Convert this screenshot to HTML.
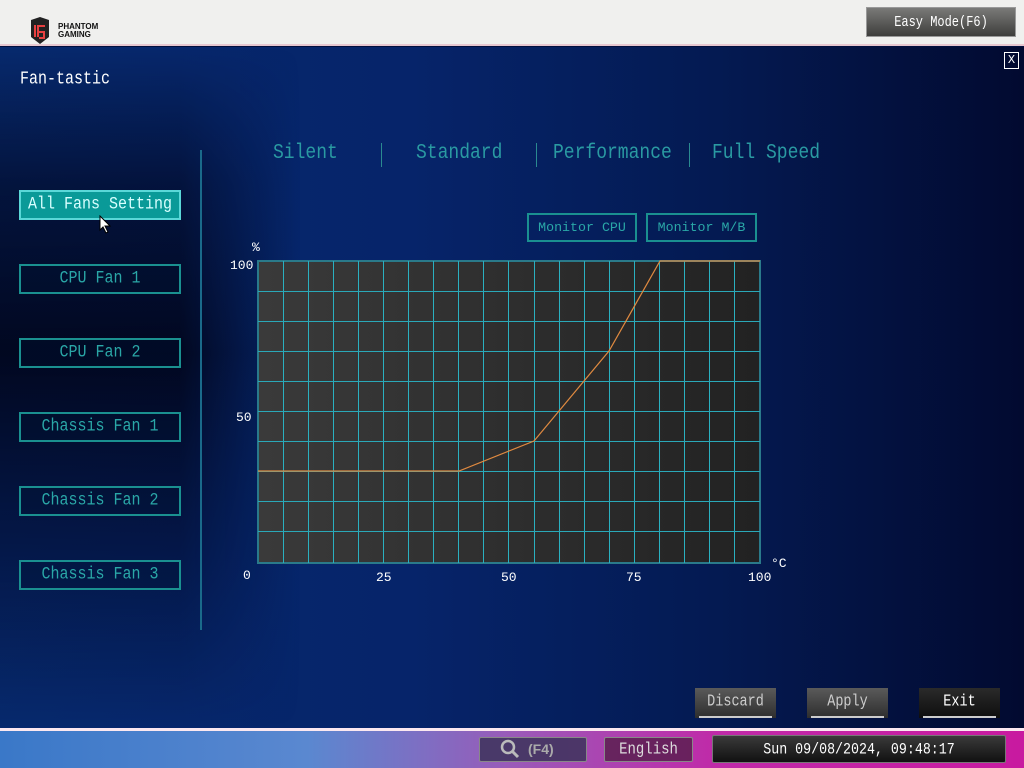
<!DOCTYPE html>
<html><head><meta charset="utf-8"><style>
*{margin:0;padding:0;box-sizing:border-box}
body{width:1024px;height:768px;overflow:hidden;position:relative;font-family:"Liberation Mono","DejaVu Sans Mono",monospace;background:#03103f}
.hdr{position:absolute;left:0;top:0;width:1024px;height:46px;background:#f0f0ee;border-bottom:2px solid #e8c8d0}
.main{position:absolute;left:0;top:47px;width:1024px;height:681px;background:linear-gradient(90deg,#072a6e 0%,#06246a 40%,#041a52 70%,#020a30 100%)}
.leftp{position:absolute;left:0;top:47px;width:300px;height:681px;background:linear-gradient(180deg,rgba(0,0,0,0) 0%,rgba(2,6,30,.6) 20%,rgba(1,4,24,.9) 45%,rgba(2,8,40,.5) 75%,rgba(0,0,0,0) 100%);-webkit-mask-image:linear-gradient(90deg,#000 60%,transparent 100%);mask-image:linear-gradient(90deg,#000 60%,transparent 100%)}
.t{position:absolute;white-space:nowrap}
.fb{position:absolute;left:19px;width:162px;height:30px;border:2px solid #1a9090;color:#2aa7a7;font-size:15px;text-align:center;line-height:26px;background:rgba(0,20,50,.3)}
.fb span{display:inline-block;transform:scaleY(1.15)}
.fb.act{background:#0a9a98;border-color:#5ad8d8;color:#d8ffff}
.mode{position:absolute;top:141px;font-size:18px;color:#2a9aa2;transform:scaleY(1.2);transform-origin:0 0}
.sep{position:absolute;top:143px;width:1px;height:24px;background:#2a8a90}
.mon{position:absolute;top:213px;height:29px;border:2px solid #1a9090;color:#2aa7a7;font-size:13.3px;line-height:25px;text-align:center}
.ax{position:absolute;color:#fff;font-size:13px}
.bb{position:absolute;top:688px;width:81px;height:30px;background:linear-gradient(#5a5a5a,#2e2e2e);color:#ccc;font-size:13.5px;text-align:center;line-height:30px}
.bb span{display:inline-block;transform:scaleY(1.2)}
.bb:after{content:"";position:absolute;left:4px;right:4px;bottom:0;height:2px;background:#ccc}
.foot{position:absolute;left:0;top:728px;width:1024px;height:40px;background:linear-gradient(90deg,#3a78c8 0%,#5a88d0 30%,#9a5ab8 50%,#c02aa8 70%,#c81aa0 100%);border-top:3px solid #fbe8f0}
.hl{position:absolute;left:258px;width:502px;height:1px;background:#2aa8b8}
</style></head><body>
<div class="hdr"></div>
<svg style="position:absolute;left:28px;top:17px" width="24" height="28" viewBox="0 0 24 28"><path d="M3 3 L12 0 L21 3 L21 20 L12 27 L3 20Z" fill="#222"/><path d="M7 8 L7 20 M10 20 L10 9 L17 9 M10 15 L16 15 L16 21 L11 21" stroke="#e84040" stroke-width="2" fill="none"/></svg>
<div class="t" style="left:58px;top:23px;font-family:'Liberation Sans',sans-serif;font-weight:bold;font-size:8px;line-height:8px;color:#111">PHANTOM<br>GAMING</div>
<div class="t" style="left:866px;top:7px;width:150px;height:30px;background:linear-gradient(#7a7a78,#3e3e3c);border:1px solid #999;color:#fff;font-size:12px;text-align:center;line-height:28px"><span style="display:inline-block;transform:scaleY(1.25)">Easy Mode(F6)</span></div>
<div class="main"></div>
<div class="leftp"></div>
<div class="t" style="left:20px;top:69px;color:#fff;font-size:15px;transform:scaleY(1.2);transform-origin:0 0">Fan-tastic</div>
<div class="t" style="left:1004px;top:52px;width:15px;height:17px;border:1px solid #fff;color:#fff;font-size:12px;text-align:center;line-height:15px">X</div>
<div style="position:absolute;left:200px;top:150px;width:2px;height:480px;background:#1a6a8a"></div>
<div class="fb act" style="top:190px"><span>All Fans Setting</span></div>
<div class="fb" style="top:264px"><span>CPU Fan 1</span></div>
<div class="fb" style="top:338px"><span>CPU Fan 2</span></div>
<div class="fb" style="top:412px"><span>Chassis Fan 1</span></div>
<div class="fb" style="top:486px"><span>Chassis Fan 2</span></div>
<div class="fb" style="top:560px"><span>Chassis Fan 3</span></div>
<svg style="position:absolute;left:99px;top:215px" width="14" height="20"><path d="M1 1 L1 15 L4 12 L7 18 L9 17 L6 11 L11 11Z" fill="#fff" stroke="#000" stroke-width="1"/></svg>
<div class="mode" style="left:273px">Silent</div>
<div class="sep" style="left:381px"></div>
<div class="mode" style="left:416px">Standard</div>
<div class="sep" style="left:536px"></div>
<div class="mode" style="left:553px">Performance</div>
<div class="sep" style="left:689px"></div>
<div class="mode" style="left:712px">Full Speed</div>
<div class="mon" style="left:527px;width:110px">Monitor CPU</div>
<div class="mon" style="left:646px;width:111px">Monitor M/B</div>
<svg style="position:absolute;left:0;top:0" width="1024" height="728">
<defs><linearGradient id="g" x1="0" x2="1"><stop offset="0" stop-color="#3a3a3a"/><stop offset="1" stop-color="#222"/></linearGradient></defs>
<rect x="258" y="261" width="502" height="302" fill="url(#g)" stroke="#2a7a8a" stroke-width="2"/>
<g stroke="#2ab0c0" stroke-width="1" shape-rendering="crispEdges">
<path d="M283.5 261V563M308.5 261V563M333.5 261V563M358.5 261V563M383.5 261V563M408.5 261V563M433.5 261V563M458.5 261V563M483.5 261V563M508.5 261V563M534.5 261V563M559.5 261V563M584.5 261V563M609.5 261V563M634.5 261V563M659.5 261V563M684.5 261V563M709.5 261V563M734.5 261V563"/>
</g>
</svg>
<div class="hl" style="top:291px"></div><div class="hl" style="top:321px"></div><div class="hl" style="top:351px"></div><div class="hl" style="top:381px"></div><div class="hl" style="top:411px"></div><div class="hl" style="top:441px"></div><div class="hl" style="top:471px"></div><div class="hl" style="top:501px"></div><div class="hl" style="top:531px"></div>
<svg style="position:absolute;left:0;top:0" width="1024" height="728">
<polyline points="258,471 459,471 534,441 609,351 660,261 760,261" fill="none" stroke="#e08a40" stroke-width="1.2"/>
</svg>
<div class="ax" style="left:252px;top:240px">%</div>
<div class="ax" style="left:230px;top:258px">100</div>
<div class="ax" style="left:236px;top:410px">50</div>
<div class="ax" style="left:243px;top:568px">0</div>
<div class="ax" style="left:376px;top:570px">25</div>
<div class="ax" style="left:501px;top:570px">50</div>
<div class="ax" style="left:626px;top:570px">75</div>
<div class="ax" style="left:748px;top:570px">100</div>
<div class="ax" style="left:771px;top:556px">°C</div>
<div class="bb" style="left:695px"><span>Discard</span></div>
<div class="bb" style="left:807px"><span>Apply</span></div>
<div class="bb" style="left:919px;background:linear-gradient(#2a2a2a,#0e0e0e);color:#fff"><span>Exit</span></div>
<div class="foot"></div>
<div class="t" style="left:479px;top:737px;width:108px;height:25px;background:rgba(60,50,90,.85);border:1px solid #888;border-radius:2px;color:#aaa;font-family:'Liberation Sans',sans-serif;font-weight:bold;font-size:14px;line-height:23px;padding-left:48px">(F4)</div>
<svg style="position:absolute;left:500px;top:739px" width="20" height="20"><circle cx="8" cy="8" r="6" stroke="#bbb" stroke-width="2.5" fill="none"/><path d="M12 12 L18 18" stroke="#bbb" stroke-width="3"/></svg>
<div class="t" style="left:604px;top:737px;width:89px;height:25px;background:rgba(90,30,80,.85);border:1px solid #888;border-radius:2px;color:#ddd;font-size:14px;text-align:center;line-height:24px"><span style="display:inline-block;transform:scaleY(1.2)">English</span></div>
<div class="t" style="left:712px;top:735px;width:294px;height:28px;background:linear-gradient(#3a3a3a,#111);border:1px solid #777;border-radius:2px;color:#fff;font-size:13.3px;text-align:center;line-height:27px"><span style="display:inline-block;transform:scaleY(1.2)">Sun 09/08/2024, 09:48:17</span></div>
</body></html>
